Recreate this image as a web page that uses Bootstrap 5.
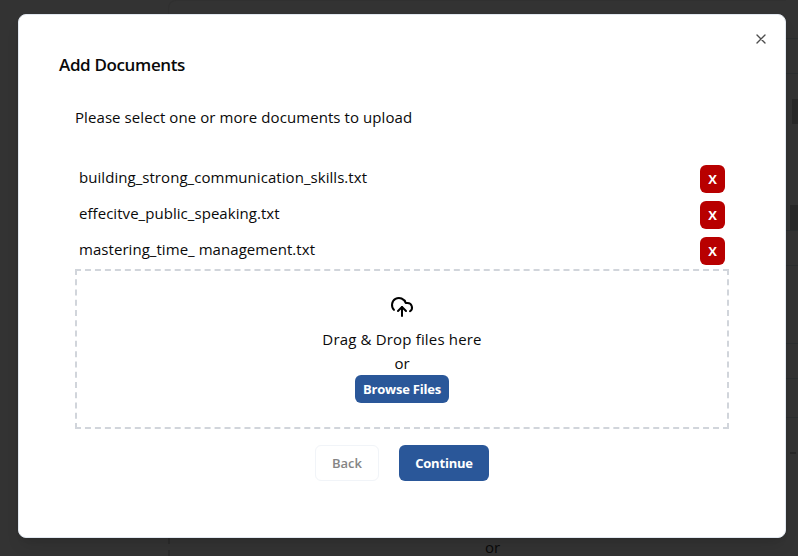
<!DOCTYPE html>
<html lang="en">
<head>
<meta charset="utf-8">
<meta name="viewport" content="width=device-width, initial-scale=1">
<title>Add Documents</title>
<link rel="stylesheet" href="https://cdn.jsdelivr.net/npm/bootstrap@5.3.0/dist/css/bootstrap.min.css">
<style>
  html, body { height: 100%; }
  body { font: 15px/24px "Open Sans", "Noto Sans", sans-serif; color: #0a0a0a; background: #333; overflow: hidden; }
  .backdrop-page { position: absolute; inset: 0; }
  .rail { width: 168px; }
  .board { border-left: 1px solid #303030; border-top: 1px solid #303030; border-top-left-radius: 8px; }
  .board-foot { height: 18px; border-left: 2px dashed #2b2b2b; }
  .board-or { padding-left: 315px; font-size: 15px; color: #0a0a0a; line-height: 18px; }
  .strip { width: 12px; }
  .strip-row { border-bottom: 1px solid #2b2e2f; }
  .chip { height: 25px; background: #282828; }
  .dash { width: 6px; height: 2px; background: #272727; }
  .dialog-wrap { position: absolute; inset: 14px 12px 18px 18px; }
  .dialog { background: #fff; border: 1px solid #e2e8f0; border-radius: 8px; padding: 36px 40px 0; box-shadow: 0 10px 15px -3px rgba(0,0,0,.1), 0 4px 6px -4px rgba(0,0,0,.1); }
  .dialog-x { position: absolute; top: 17px; right: 17px; width: 16px; height: 16px; color: #4d4d4d; }
  .dialog-title { font-size: 17px; line-height: 28px; font-weight: 600; letter-spacing: -.36px; }
  .dialog-main { padding: 26px 16px 0; }
  .intro { letter-spacing: .08px; }
  .files { padding: 32px 4px 0; }
  .file-item { height: 36px; padding-top: 4px; letter-spacing: .05px; }
  .btn { --bs-btn-font-size: 13px; --bs-btn-line-height: 20px; --bs-btn-font-weight: 600; --bs-btn-border-radius: 6px; }
  .btn-remove { --bs-btn-color: #fff; --bs-btn-bg: #b80000; --bs-btn-font-weight: 700; width: 25px; height: 28px; padding: 3px 0; letter-spacing: 0; }
  .btn-brand { --bs-btn-color: #fff; --bs-btn-bg: #2a5799; --bs-btn-font-weight: 700; }
  .btn-browse { width: 94px; height: 28px; padding: 3px 0; letter-spacing: -.22px; }
  .btn-back { --bs-btn-color: #858585; --bs-btn-border-color: #f1f4f8; --bs-btn-bg: #fff; width: 64px; height: 36px; padding: 7px 0; }
  .btn-go { width: 90px; height: 36px; padding: 8px 0; letter-spacing: -.2px; }
  .drop { height: 160px; border: 2px dashed #d1d5db; padding-top: 24px; }
  .drop-icon { width: 24px; height: 24px; margin-bottom: 8px; }
  .drop-text { letter-spacing: .17px; }
  .actions { gap: 20px; padding-top: 16px; }
</style>
</head>
<body>
<div class="backdrop-page d-flex" aria-hidden="true">
  <div class="rail"></div>
  <div class="flex-grow-1 d-flex flex-column">
    <div class="board flex-grow-1"></div>
    <div class="board-foot"><div class="board-or">or</div></div>
  </div>
  <div class="strip d-flex flex-column align-items-stretch">
    <div class="strip-row" style="height:39px"></div>
    <div class="strip-row" style="height:35px"></div>
    <div class="chip ms-auto w-50" style="margin-top:25px"></div>
    <div class="chip ms-1" style="margin-top:81px"></div>
    <div class="strip-row" style="height:1px"></div>
    <div class="strip-row" style="height:35px"></div>
    <div class="strip-row" style="height:78px"></div>
    <div class="strip-row" style="height:35px"></div>
    <div class="strip-row" style="height:39px"></div>
    <div class="dash ms-1" style="margin-top:34px"></div>
  </div>
</div>
<div class="dialog-wrap">
  <div class="dialog h-100" role="dialog" aria-labelledby="dlgTitle">
    <svg class="dialog-x" viewBox="0 0 24 24" fill="none" stroke="currentColor" stroke-width="2" stroke-linecap="round" stroke-linejoin="round"><path d="M18 6 6 18M6 6l12 12"/></svg>
    <h2 class="dialog-title m-0" id="dlgTitle">Add Documents</h2>
    <div class="dialog-main">
      <p class="intro m-0">Please select one or more documents to upload</p>
      <ul class="files list-unstyled m-0">
        <li class="file-item d-flex justify-content-between align-items-start"><span>building_strong_communication_skills.txt</span><button class="btn btn-remove border-0">X</button></li>
        <li class="file-item d-flex justify-content-between align-items-start"><span>effecitve_public_speaking.txt</span><button class="btn btn-remove border-0">X</button></li>
        <li class="file-item d-flex justify-content-between align-items-start"><span>mastering_time_ management.txt</span><button class="btn btn-remove border-0">X</button></li>
      </ul>
      <div class="drop d-flex flex-column align-items-center">
        <svg class="drop-icon" viewBox="0 0 24 24" fill="none" stroke="#000" stroke-width="2" stroke-linecap="round" stroke-linejoin="round"><path d="M4 14.899A7 7 0 1 1 15.71 8h1.79a4.5 4.5 0 0 1 2.5 8.242"/><path d="M12 12v9"/><path d="m16 16-4-4-4 4"/></svg>
        <div class="drop-text">Drag &amp; Drop files here</div>
        <div>or</div>
        <button class="btn btn-brand btn-browse border-0">Browse Files</button>
      </div>
      <div class="actions d-flex justify-content-center">
        <button class="btn btn-back">Back</button>
        <button class="btn btn-brand btn-go border-0">Continue</button>
      </div>
    </div>
  </div>
</div>
<script src="https://cdn.jsdelivr.net/npm/bootstrap@5.3.0/dist/js/bootstrap.bundle.min.js"></script>
</body>
</html>
